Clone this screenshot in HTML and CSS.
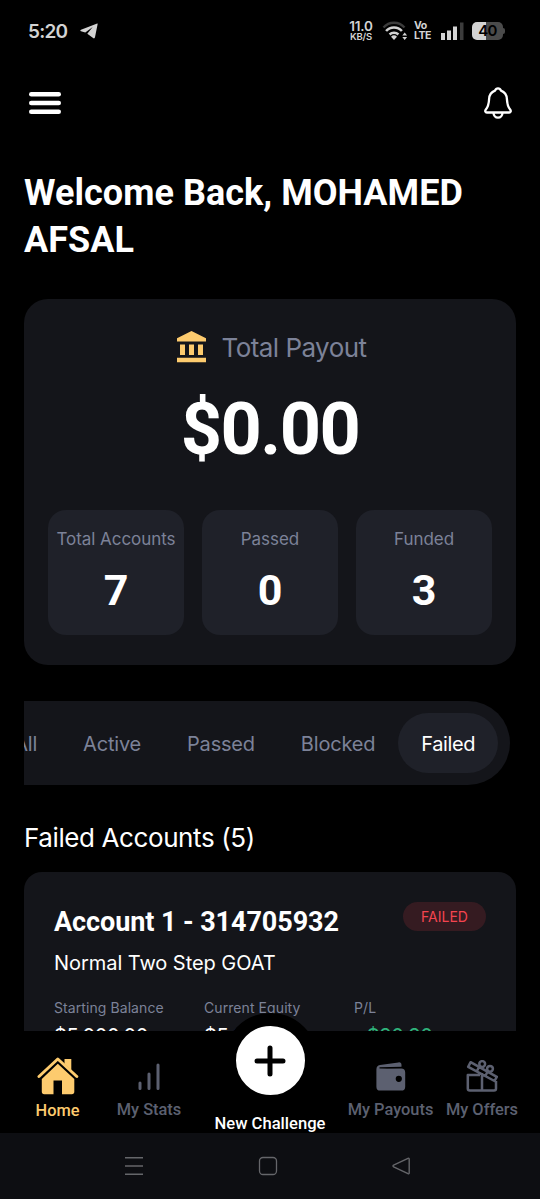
FILE: index.html
```
<!DOCTYPE html>
<html lang="en">
<head>
<meta charset="utf-8">
<title>Home</title>
<link rel="stylesheet" href="styles.css">
</head>
<body>
<div class="phone">
  <div class="status">
    <span class="clock">5:20</span>
    <svg class="plane" width="18" height="16" viewBox="0 0 18 16"><path d="M17.200.5 1 6.700c-.9.400-.9 1.300 0 1.600l4.300 1.200 7.400-5.400-5.400 6.600 5.800 4.400c.9.600 1.700.3 1.900-.8L17.600 1.200c.1-.6.1-.9-.4-.7z" fill="#d3d3d3"/></svg>
    <div class="status-right">
      <span class="rate"><b>11.0</b><i>KB/S</i></span>
      <svg class="wifi" width="26" height="20" viewBox="0 0 26 20" fill="none"><path d="M1.500 6.500a14 14 0 0 1 21 0" stroke="#3c3c3c" stroke-width="2.400"/><path d="M4.100 10a10.500 10.500 0 0 1 15.800 0M7.600 13.500a6.200 6.200 0 0 1 8.800 0" stroke="#d3d3d3" stroke-width="2.500"/><path d="M12 19l-3-3.200a4.300 4.300 0 0 1 6 0zM20.300 14.500l2.400-3 2.400 3zM20.300 16l2.400 3 2.400-3z" fill="#d3d3d3"/></svg>
      <span class="volte"><b>Vo</b><b>LTE</b></span>
      <svg class="signal" width="24" height="19" viewBox="0 0 24 19"><path fill="#d3d3d3" d="M1 11h4v7H1zM7 8.500h4V18H7zM13 4.500h4V18h-4z"/><path fill="#3c3c3c" d="M20 .5h3.500V18H20z"/></svg>
      <span class="battery">40</span><span class="battery-tip"></span>
    </div>
  </div>
  <header class="topbar">
    <svg width="32" height="22" viewBox="0 0 32 22"><g fill="#fff"><rect width="32" height="4.600" rx="2.300"/><rect y="8.700" width="32" height="4.600" rx="2.300"/><rect y="17.400" width="32" height="4.600" rx="2.300"/></g></svg>
    <svg width="28" height="32" viewBox="0 0 28 32" fill="none" stroke="#fff" stroke-width="2.300" stroke-linejoin="round"><path d="M14 1.300c-1.500 0-2.500.9-3 2.300C7.200 5 5.300 8.100 5.100 12c-.2 5.200-.5 7.300-3.400 10.800-.9 1.200-.4 2.700 1.100 2.700h22.400c1.500 0 2-1.500 1.100-2.700-2.900-3.500-3.200-5.600-3.400-10.800-.2-3.900-2.100-7-5.900-8.400-.5-1.400-1.500-2.300-3-2.300z"/><path d="M9.500 25.500c0 3 2 5.200 4.500 5.200s4.500-2.200 4.500-5.200"/></svg>
  </header>
  <main class="content">
    <h1 class="welcome">Welcome Back, MOHAMED AFSAL</h1>
    <section class="payout">
      <div class="payout-title">
        <svg width="31" height="32" viewBox="0 0 31 32" fill="#fdcb6e"><path d="M15.500 0 30 7.300V10.500H1V7.300zM4 13.500h5v10.500H4zM13 13.500h5v10.500h-5zM22 13.500h5v10.500h-5zM1 26.800h29V31.300H1z"/></svg>
        <span>Total Payout</span>
      </div>
      <div class="amount">$0.00</div>
      <div class="tiles">
        <div class="tile"><span class="tile-label">Total Accounts</span><b>7</b></div>
        <div class="tile"><span class="tile-label">Passed</span><b>0</b></div>
        <div class="tile"><span class="tile-label">Funded</span><b>3</b></div>
      </div>
    </section>
    <div class="tabs">
      <span class="tab">All</span><span class="tab">Active</span><span class="tab">Passed</span><span class="tab">Blocked</span><span class="tab tab-on">Failed</span>
    </div>
    <h2 class="section">Failed Accounts (5)</h2>
    <article class="account">
      <div class="account-head"><h3>Account 1 - 314705932</h3><span class="badge">FAILED</span></div>
      <p class="plan">Normal Two Step GOAT</p>
      <div class="figures">
        <div><small>Starting Balance</small><span>$5,000.00</span></div>
        <div><small>Current Equity</small><span>$5,090.90</span></div>
        <div><small>P/L</small><span class="gain">+$90.90</span></div>
      </div>
    </article>
  </main>
  <nav class="nav">
    <div class="item item-on">
      <svg width="42" height="40" viewBox="0 0 42 40"><path d="M2 20.500 20.800 3 39.800 20.500" fill="none" stroke="#fdcb6e" stroke-width="3" stroke-linecap="round" stroke-linejoin="round"/><path d="M27.500 3h6.800v11l-6.800-6zM20.800 7.800 37.300 23v12.800c0 1.600-.8 2.500-2.500 2.500H25V24.500h-8.500v13.800H7.300c-1.700 0-2.500-.9-2.500-2.500V23z" fill="#fdcb6e"/></svg>
      <span>Home</span>
    </div>
    <div class="item">
      <svg width="22" height="28" viewBox="0 0 22 28" stroke="#5c6070" stroke-width="3" stroke-linecap="round"><path d="M2 20v5.500M11 11v14.500M20 2v23.500"/></svg>
      <span>My Stats</span>
    </div>
    <div class="item item-new">
      <div class="fab"><svg width="32" height="32" viewBox="0 0 32 32" stroke="#000" stroke-width="5" stroke-linecap="round"><path d="M16 3v26M3 16h26"/></svg></div>
      <span>New Challenge</span>
    </div>
    <div class="item">
      <svg width="30" height="29" viewBox="0 0 30 29"><path fill="#5c6070" fill-rule="evenodd" d="M4 3 22.500.4c1.800-.3 3 .7 3 2.500V5L4 6.500h21.300c2.500 0 3.900 1.400 3.900 3.900v14.300c0 2.500-1.400 3.900-3.900 3.900H4.200C1.700 28.600.4 27.200.4 24.700V7.500C.4 4.900 1.500 3.400 4 3zM22.800 13.700a3.100 3.100 0 1 0 0 6.200 3.100 3.100 0 0 0 0-6.200z"/><path d="M3.500 5.900 26 5.400" stroke="#000" stroke-width="1.100"/></svg>
      <span>My Payouts</span>
    </div>
    <div class="item">
      <svg width="32" height="32" viewBox="0 0 32 32" fill="none" stroke="#5c6070" stroke-width="2.500" stroke-linejoin="round"><path d="M14 15H1.800v13.500c0 1.300.7 2 2 2H28c1.300 0 2-.7 2-2V21M16 13v17.500M4.600 2.200 30.800 16.800 28.500 21 2.200 6.800zM13 7l-2.300 4.500M21.500 11.700l-2.300 4.500"/><circle cx="16.200" cy="4" r="2.900"/><circle cx="24" cy="8.800" r="2.900"/></svg>
      <span>My Offers</span>
    </div>
  </nav>
  <div class="system">
    <svg width="20" height="20" viewBox="0 0 20 20" stroke="#65666a" stroke-width="1.500"><path d="M1 1.700h18M1 10h18M1 18.300h18"/></svg>
    <svg width="20" height="20" viewBox="0 0 20 20" fill="none" stroke="#65666a" stroke-width="1.300"><rect x="1.500" y="1.500" width="17" height="17" rx="3.500"/></svg>
    <svg width="20" height="20" viewBox="0 0 20 20" fill="none" stroke="#65666a" stroke-width="1.400" stroke-linejoin="round"><path d="M17 2.300 2.600 9.200c-.8.400-.8 1.200 0 1.600L17 17.700c.7.300 1.200 0 1.200-.7V3c0-.7-.5-1-1.200-.7z"/></svg>
  </div>
</div>
</body>
</html>
```
FILE: styles.css
```
* { box-sizing: border-box; margin: 0; padding: 0; }
body { background: #000; color: #fff; font-family: Inter, "Open Sans", sans-serif; }
svg { display: block; flex: none; }
.phone { width: 540px; height: 1199px; display: flex; flex-direction: column; overflow: hidden; background: #000; white-space: nowrap; }

.status { height: 62px; flex: none; display: flex; align-items: center; padding: 0 35px 0 28px; color: #d3d3d3; }
.clock { font-size: 19px; font-weight: 600; letter-spacing: -.8px; width: 52px; }
.status-right { margin-left: auto; display: flex; align-items: center; }
.rate, .volte { display: flex; flex-direction: column; align-items: center; font-style: normal; }
.rate { width: 26px; margin-right: 8px; }
.rate b { font-size: 13.500px; line-height: 11px; font-weight: 600; letter-spacing: -.2px; }
.rate i { font-size: 9.500px; line-height: 9px; font-style: normal; font-weight: 600; letter-spacing: -.2px; }
.volte { width: 18px; align-items: flex-start; margin: 0 8px 0 6px; font-size: 10.500px; line-height: 10px; letter-spacing: -.5px; }
.battery { width: 31px; height: 18px; border-radius: 5px; margin-left: 8px; background: linear-gradient(90deg, #d3d3d3 44%, #4b4b4b 44%); color: #000; font-size: 15px; line-height: 18px; font-weight: 600; letter-spacing: -.6px; text-align: center; }
.battery-tip { width: 2px; height: 6px; border-radius: 0 2px 2px 0; background: #4b4b4b; }

.topbar { height: 82px; flex: none; display: flex; align-items: center; justify-content: space-between; padding: 0 28px 0 29px; }
.content { flex: 1; min-height: 0; overflow: hidden; padding: 26px 24px 0; }
.welcome { font: 700 36px/47px Roboto, sans-serif; letter-spacing: .04px; white-space: normal; }

.payout { margin-top: 35px; height: 366px; border-radius: 24px; background: #14151a; padding: 32px 24px 30px; }
.payout-title { display: flex; justify-content: center; gap: 15px; height: 32px; padding-left: 2px; font-size: 26px; line-height: 33px; font-weight: 400; letter-spacing: -.55px; color: #7c8298; }
.amount { margin-top: 27px; font: 700 72px/80px Roboto, sans-serif; letter-spacing: -1.500px; text-align: center; }
.tiles { margin-top: 40px; display: grid; grid-template-columns: repeat(3, 1fr); gap: 18px; }
.tile { height: 125px; border-radius: 18px; background: #1f2129; padding-top: 18px; display: flex; flex-direction: column; align-items: center; }
.tile-label { font-size: 17px; line-height: 23px; font-weight: 400; letter-spacing: -.05px; color: #7c8298; }
.tile b { margin-top: 14px; font: 700 43px/50px Roboto, sans-serif; }

.tabs { margin-top: 36px; width: 486px; height: 84px; padding: 12px; border-radius: 0 42px 42px 0; background: #14151a; display: flex; justify-content: flex-end; overflow: hidden; }
.tab { flex: none; padding: 0 23px; font-size: 20px; line-height: 62px; font-weight: 400; letter-spacing: -.2px; color: #7c8298; }
.tab-on { height: 60px; border-radius: 30px; background: #1f2129; color: #fff; letter-spacing: -.4px; }

.section { margin-top: 36px; font-size: 26px; line-height: 34px; font-weight: 400; letter-spacing: -.4px; }
.account { margin-top: 17px; height: 300px; border-radius: 18px; background: #14151a; padding: 30px; }
.account-head { display: flex; justify-content: space-between; align-items: flex-start; }
.account h3 { margin-top: 3px; font: 700 27px/34px Roboto, sans-serif; letter-spacing: -.08px; }
.badge { width: 83px; height: 29px; border-radius: 15px; background: #351b21; color: #f4444f; font-size: 14px; line-height: 29px; text-align: center; }
.plan { margin-top: 10px; font-size: 20px; line-height: 28px; letter-spacing: -.05px; }
.figures { margin-top: 21px; display: grid; grid-template-columns: 150px 150px 1fr; }
.figures div { display: flex; flex-direction: column; gap: 4px; }
.figures small { font-size: 14px; line-height: 20px; color: #7c8298; font-weight: 400; letter-spacing: .08px; }
.figures span { font-size: 20px; line-height: 28px; letter-spacing: -.4px; }
.figures .gain { color: #2fb47c; }

.nav { position: relative; height: 102px; flex: none; background: #000; display: grid; grid-template-columns: 91px 92px 150px 91px 92px; padding: 0 12px; }
.item { display: flex; flex-direction: column; align-items: center; justify-content: flex-end; padding-bottom: 14px; gap: 9px; font: 500 16.400px/20px Roboto, sans-serif; color: #5c6070; }
.item:last-child { gap: 8px; }
.item-on { color: #fdcb6e; padding-bottom: 13px; gap: 5px; }
.item-new { color: #fff; padding-bottom: 0; justify-content: flex-start; gap: 6px; margin-top: -18px; font-size: 16.600px; }
.fab { width: 95px; height: 95px; border-radius: 50%; border: 13px solid #000; background: #fff; display: grid; place-items: center; flex: none; }
.system { height: 66px; flex: none; background: #0d0e12; display: flex; align-items: center; justify-content: space-between; padding: 0 129px 0 124px; }
```
